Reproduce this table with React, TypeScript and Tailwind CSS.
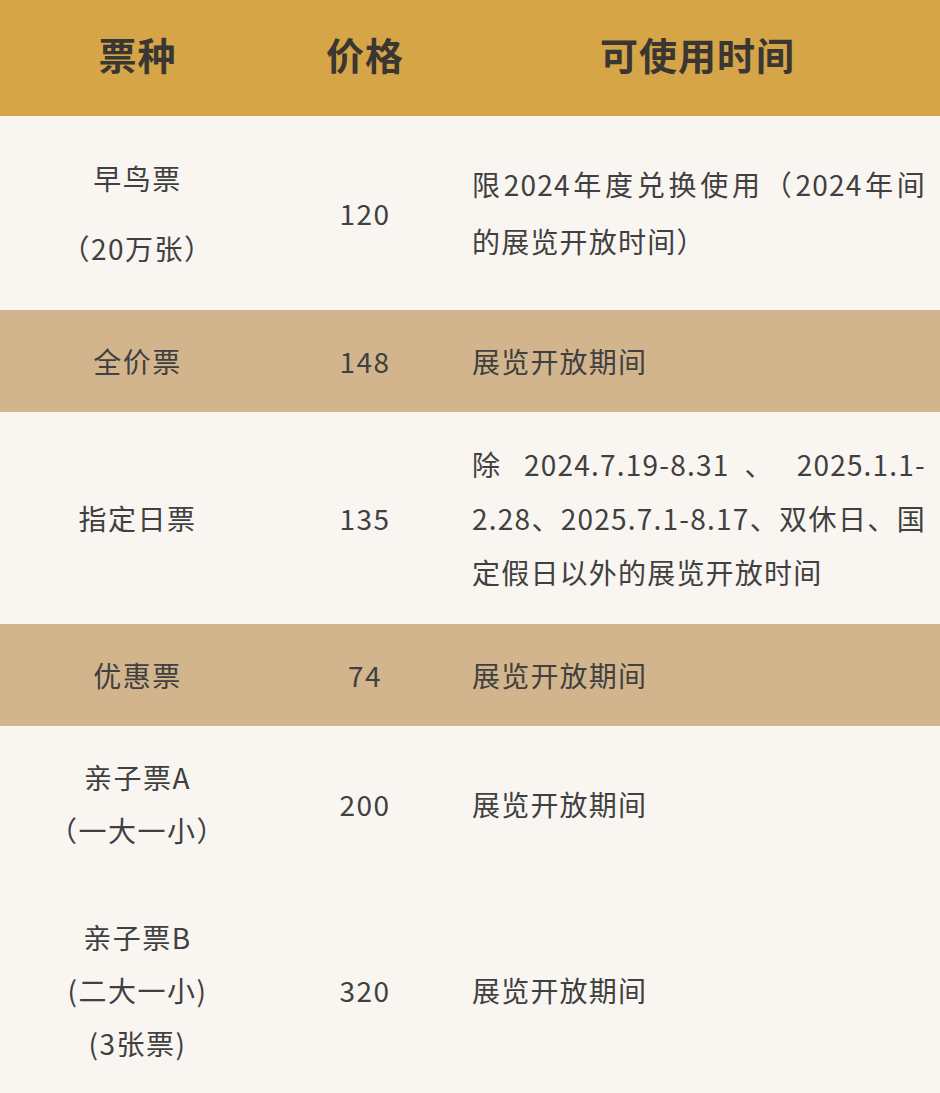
import React from 'react';

interface TicketRow {
  name: string[];
  price: string;
  time: string[];
  height: string;
  tan: boolean;
  nameLeading: string;
}

const font = { fontFamily: '"Noto Sans CJK SC", "Noto Sans", sans-serif' };

const rows: TicketRow[] = [
  {
    name: ['早鸟票', '（20万张）'],
    price: '120',
    time: ['限2024年度兑换使用（2024年间', '的展览开放时间）'],
    height: 'h-[194px]',
    tan: false,
    nameLeading: 'leading-[70px]',
  },
  { name: ['全价票'], price: '148', time: ['展览开放期间'], height: 'h-[102px]', tan: true, nameLeading: 'leading-[54px]' },
  {
    name: ['指定日票'],
    price: '135',
    time: ['除 2024.7.19-8.31 、 2025.1.1-', '2.28、2025.7.1-8.17、双休日、国', '定假日以外的展览开放时间'],
    height: 'h-[212px]',
    tan: false,
    nameLeading: 'leading-[54px]',
  },
  { name: ['优惠票'], price: '74', time: ['展览开放期间'], height: 'h-[102px]', tan: true, nameLeading: 'leading-[54px]' },
  {
    name: ['亲子票A', '（一大一小）'],
    price: '200',
    time: ['展览开放期间'],
    height: 'h-[156px]',
    tan: false,
    nameLeading: 'leading-[53px]',
  },
  {
    name: ['亲子票B', '(二大一小)', '(3张票)'],
    price: '320',
    time: ['展览开放期间'],
    height: 'h-[216px]',
    tan: false,
    nameLeading: 'leading-[53px]',
  },
];

export default function App() {
  return (
    <div className="w-[940px] h-[1093px] overflow-hidden bg-[#f9f5f0] text-[#404040]" style={font}>
      {/* Header */}
      <div className="flex h-[116px] pb-[10px] bg-[#d5a548] text-[#3a3632] text-[38px] font-bold tracking-[1px]">
        <div className="w-[275px] shrink-0 flex items-center justify-center">票种</div>
        <div className="w-[180px] shrink-0 flex items-center justify-center">价格</div>
        <div className="flex-1 min-w-0 flex items-center justify-center">可使用时间</div>
      </div>

      {rows.map((r) => (
        <div key={r.price} className={`flex ${r.height} ${r.tan ? 'bg-[#d3b58d]' : 'bg-[#f9f5f0]'} text-[28px] tracking-[1.5px]`}>
          <div className={`w-[275px] shrink-0 flex flex-col items-center justify-center ${r.nameLeading}`}>
            {r.name.map((n) => (
              <div key={n}>{n}</div>
            ))}
          </div>
          <div className="w-[180px] shrink-0 flex items-center justify-center">{r.price}</div>
          <div
            className={`flex-1 min-w-0 flex flex-col justify-center pl-[17px] pr-[14px] tracking-[1.2px] ${r.time.length === 2 ? 'leading-[57px]' : 'leading-[54px]'}`}
          >
            {r.time.map((t, i) => (
              <div
                key={t}
                className={`whitespace-nowrap ${i < r.time.length - 1 ? 'text-justify [text-align-last:justify]' : ''}`}
              >
                {t}
              </div>
            ))}
          </div>
        </div>
      ))}
    </div>
  );
}
